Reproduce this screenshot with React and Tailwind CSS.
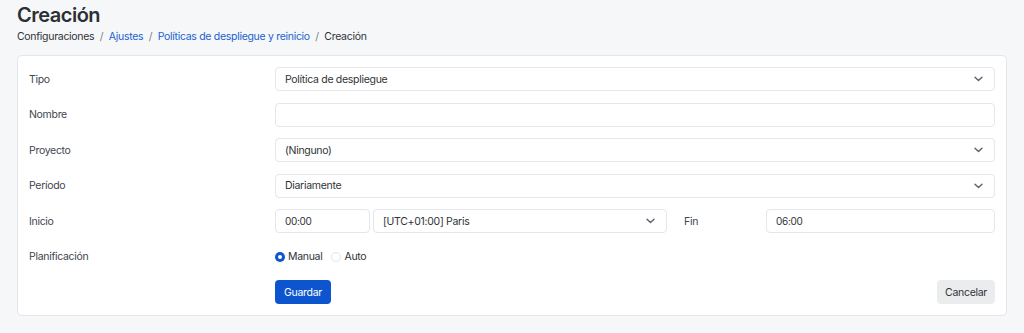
import React from 'react'

const font = { fontFamily: 'Inter, "Noto Sans", sans-serif' }

const Chevron = () => (
  <svg width="9" height="6" viewBox="0 0 9 6" fill="none" className="shrink-0">
    <path d="M1 1.2l3.5 3.4L8 1.2" stroke="#5b6270" strokeWidth="1.4" strokeLinecap="round" strokeLinejoin="round" />
  </svg>
)

const Select = ({ value, className = '' }) => (
  <div className={`flex h-6 items-center justify-between rounded-[4px] border border-[#e4e6ea] bg-white pl-[9px] pr-[11px] text-[10.5px] tracking-[-0.3px] text-[#2f3337] ${className}`}>
    <span className="pt-px">{value}</span>
    <Chevron />
  </div>
)

const Input = ({ value = '', className = '' }) => (
  <div className={`flex h-6 items-center rounded-[4px] border border-[#e4e6ea] bg-white pl-[9px] pt-px text-[10px] tracking-[-0.3px] text-[#2f3337] ${className}`}>
    {value}
  </div>
)

const Row = ({ label, children }) => (
  <div className="flex h-6 items-center">
    <div className="w-[246px] shrink-0 pt-px text-[10.5px] tracking-[-0.3px] text-[#41464d]">{label}</div>
    <div className="flex min-w-0 flex-1 items-center">{children}</div>
  </div>
)

export default function App() {
  return (
    <div className="min-h-[333px] bg-[#f6f7f9] px-[17px]" style={font}>
      <h1 className="pt-[2px] text-[20px] font-semibold leading-[26px] tracking-[-0.5px] text-[#2b2f36]">Creación</h1>
      <nav className="mt-[1px] flex items-center gap-[5.5px] text-[10.5px] leading-4 tracking-[-0.3px] text-[#2f3337]">
        <span>Configuraciones</span>
        <span className="text-[#7a7f87]">/</span>
        <span className="text-[#1a5fd0]">Ajustes</span>
        <span className="text-[#7a7f87]">/</span>
        <span className="text-[#1a5fd0]">Políticas de despliegue y reinicio</span>
        <span className="text-[#7a7f87]">/</span>
        <span>Creación</span>
      </nav>

      <div className="mt-[10px] flex w-[990px] flex-col gap-[11.5px] rounded-[5px] border border-[#e4e6ea] bg-white p-[11px]">
        <Row label="Tipo">
          <Select value="Política de despliegue" className="flex-1" />
        </Row>
        <Row label="Nombre">
          <Input className="flex-1" />
        </Row>
        <Row label="Proyecto">
          <Select value="(Ninguno)" className="flex-1" />
        </Row>
        <Row label="Período">
          <Select value="Diariamente" className="flex-1" />
        </Row>
        <Row label="Inicio">
          <Input value="00:00" className="w-[95px]" />
          <Select value="[UTC+01:00] Paris" className="ml-[3px] w-[294px]" />
          <div className="w-[99px] pl-[17px] pt-px text-[10.5px] tracking-[-0.3px] text-[#41464d]">Fin</div>
          <Input value="06:00" className="flex-1" />
        </Row>
        <Row label="Planificación">
          <label className="flex items-center gap-[3px] text-[10.5px] tracking-[-0.3px] text-[#2f3337]">
            <span className="flex h-[10px] w-[10px] items-center justify-center rounded-full bg-[#0d55cf]">
              <span className="h-[4px] w-[4px] rounded-full bg-white" />
            </span>
            <span className="pt-px">Manual</span>
          </label>
          <label className="ml-[9px] flex items-center gap-[3px] text-[10.5px] tracking-[-0.3px] text-[#2f3337]">
            <span className="h-[10px] w-[10px] rounded-full border border-[#e1e3e7] bg-white" />
            <span className="pt-px">Auto</span>
          </label>
        </Row>
        <Row label="">
          <button className="h-6 rounded-[4px] bg-[#0d55cf] px-[9px] pt-px text-[10.5px] tracking-[-0.3px] text-white">Guardar</button>
          <button className="ml-auto h-6 rounded-[4px] bg-[#ebecee] px-[8px] pt-px text-[10.5px] tracking-[-0.3px] text-[#2f3337]">Cancelar</button>
        </Row>
      </div>
    </div>
  )
}
